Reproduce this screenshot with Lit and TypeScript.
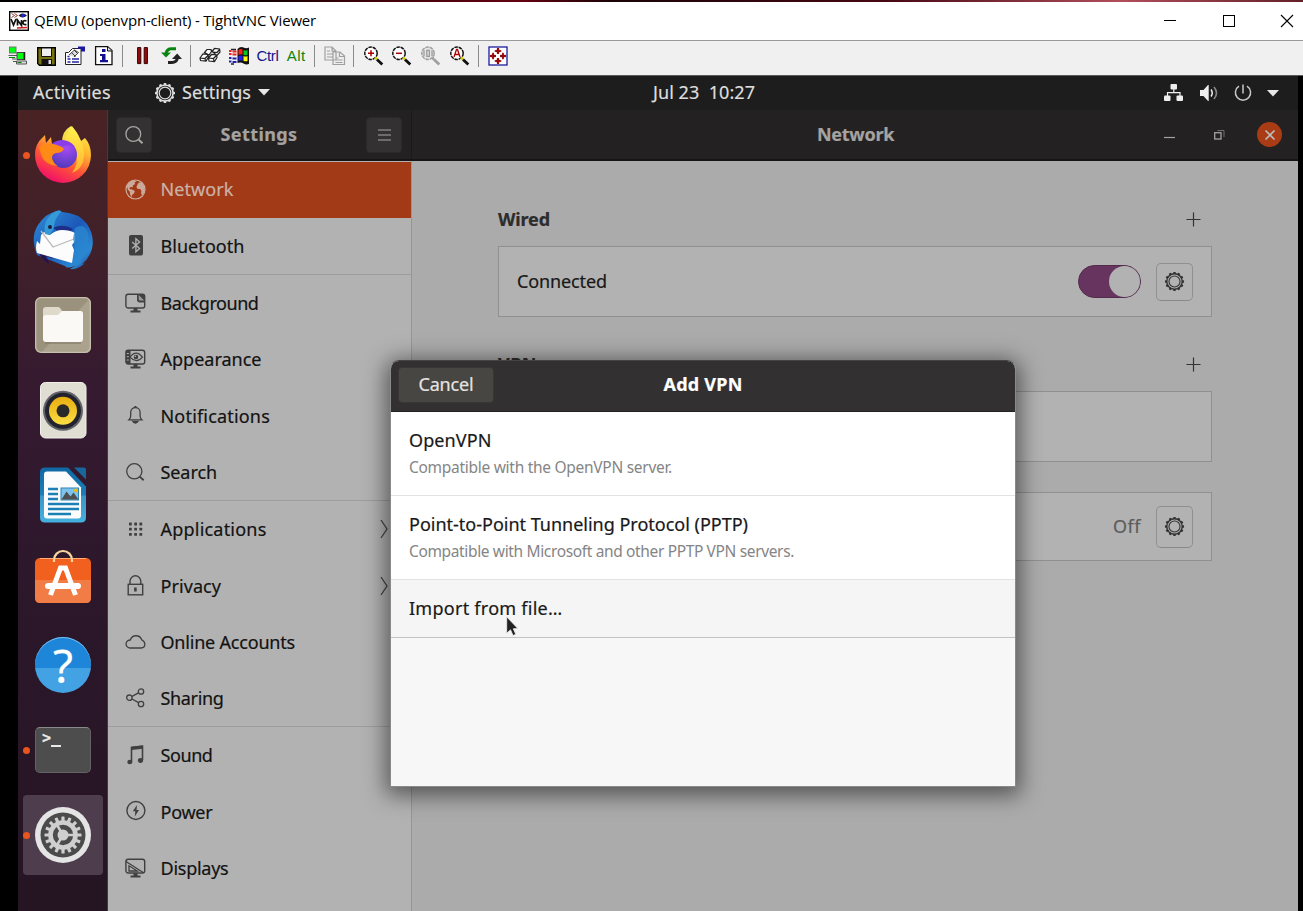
import { LitElement, html, svg, css } from "lit";
import { customElement, property, query } from "lit/decorators.js";
import { classMap } from "lit/directives/class-map.js";

/* One line of text whose tracking is adjusted to a nominal width. */
@customElement("fit-text")
class FitText extends LitElement {
  static styles = css`
    :host { display: inline-block; white-space: pre; line-height: 1.3; flex: none; }
  `;
  @property() text = "";
  @property({ type: Number }) w = 0;
  @query("span") span!: HTMLSpanElement;
  updated() {
    const natural = this.span.getBoundingClientRect().width;
    if (this.w && natural) this.span.style.letterSpacing = `${(this.w - natural) / this.text.length}px`;
  }
  render() { return html`<span>${this.text}</span>`; }
}

const teeth = (n: number, c: number, r: number, w: number, h: number) =>
  Array.from({ length: n }, (_, i) =>
    svg`<rect x=${c - w / 2} y=${c - r} width=${w} height=${h} rx=".6" transform="rotate(${(i * 360) / n} ${c} ${c})" fill="currentColor"/>`);

const gear = html`<svg width="22" height="22" viewBox="0 0 22 22">
  ${teeth(12, 11, 10, 2.6, 2.2)}
  <circle cx="11" cy="11" r="8.100" fill="none" stroke="currentColor" stroke-width="1.500"/>
  <circle cx="11" cy="11" r="5.800" fill="none" stroke="currentColor" stroke-width="1.200"/></svg>`;

const search = html`<svg width="20" height="20" viewBox="0 0 20 20" fill="none" stroke="currentColor" stroke-width="1.3"><circle cx="9.300" cy="9" r="7.400"/><path d="M14.500 14.600l4 3.600" stroke-width="2"/></svg>`;

const monitor = svg`<rect x=".9" y="1.2" width="18.8" height="13.8" rx="2.2" fill="none" stroke="currentColor" stroke-width="1.4"/><path d="M8.5 15h4v2.4h3v2h-10v-2h3z" fill="currentColor"/>`;

const sideIcons: Record<string, unknown> = {
  Network: html`<svg width="21" height="21" viewBox="0 0 21 21"><circle cx="10.5" cy="10.5" r="9.5" fill="none" stroke="currentColor" stroke-width="1.2"/><path fill="currentColor" d="M2 6.5C4 3 6.500 1.500 10 1.300l1.300 1.500-2 .8 1 1.300-2.300 1.300-.3 2-2-.3-1.500 1.300 1 1 2 .2 2.600 1.700-.8 2.300-1.700 1.200-.5 2.400-1.700-2.500-.3-2.800-1.900-2-.7-2.500zM12.500 5l2-1.800 2.300.6 2.800 4.200.2 4-1.500 3-1.300 1.700-.9-2.700.3-2.300-1.300-1.600-2.700-.3-1-1.900 1-1.800z"/></svg>`,
  Bluetooth: html`<svg width="21" height="21" viewBox="0 0 21 21"><rect x="4" y="0" width="14" height="20.500" rx="2" fill="currentColor"/><path d="M7.200 7l7.400 6.500-3.700 3.300V3.600l3.700 3.300L7.200 13.500" fill="none" stroke="#b2b2b2" stroke-width="1.300"/></svg>`,
  Background: html`<svg width="21" height="21" viewBox="0 0 21 21">${monitor}<path d="M12 1v5.500q0 3 3 3h5V3.500L18 1z" fill="currentColor"/><path d="M13.700 2l5.500 5.500h-4q-1.500 0-1.500-1.500z" fill="#999"/></svg>`,
  Appearance: html`<svg width="21" height="21" viewBox="0 0 21 21">${monitor}<path d="M1 1h4.500v14H1z" fill="currentColor"/><path d="M1.800 4.500h2M1.800 7.700h2M1.800 11h2" stroke="#b2b2b2"/><path d="M5 8.200q6-8 12.500 0q-6 7-12.500 0z" fill="none" stroke="currentColor" stroke-width="1.200"/><circle cx="11" cy="8" r="2.300" fill="currentColor"/><circle cx="10.300" cy="7.300" r=".8" fill="#b2b2b2"/></svg>`,
  Notifications: html`<svg width="21" height="21" viewBox="0 0 21 21" fill="none" stroke="currentColor" stroke-width="1.300"><path d="M4 14.800q1.700-1.500 1.700-4V7.200a4.700 4.700 0 0 1 9.400 0v3.600q0 2.500 1.700 4z"/><path d="M10.400 1v2" stroke-width="2"/><path d="M8 16.500q2.400 3 4.800 0z" fill="currentColor"/></svg>`,
  Search: html`<svg width="21" height="21" viewBox="0 0 21 21" fill="none" stroke="currentColor" stroke-width="1.300"><circle cx="9.300" cy="9.300" r="7.600"/><path d="M14.700 14.600l4 3.600" stroke-width="1.900"/></svg>`,
  Applications: html`<svg width="21" height="21" viewBox="0 0 21 21" fill="currentColor">${[4, 9.2, 14.4].map(y => [4, 9.2, 14.4].map(x => svg`<rect x=${x} y=${y - 0.4} width="2.800" height="2.800" rx=".5"/>`))}</svg>`,
  Privacy: html`<svg width="21" height="21" viewBox="0 0 21 21" fill="none" stroke="currentColor" stroke-width="1.400"><rect x="3.200" y="9.300" width="14.500" height="10.500"/><path d="M5 9V6.200a5.400 5.400 0 0 1 10.800 0V9"/><path d="M10.400 12.500v4" stroke-width="2.600"/></svg>`,
  "Online Accounts": html`<svg width="21" height="21" viewBox="0 0 21 21" fill="none" stroke="currentColor" stroke-width="1.300"><path d="M4.800 16a4 4 0 0 1 .5-8A6 6 0 0 1 16.700 7.800q2.700.8 3.200 4.300 0 3.900-3.900 3.900z"/></svg>`,
  Sharing: html`<svg width="21" height="21" viewBox="0 0 21 21" fill="none" stroke="currentColor" stroke-width="1.300"><circle cx="4.400" cy="9.700" r="2.700"/><circle cx="16" cy="3.500" r="2.700"/><circle cx="16" cy="16" r="2.700"/><path d="M7 8.300l6.500-3.400M7 11l6.500 3.600"/></svg>`,
  Sound: html`<svg width="21" height="21" viewBox="0 0 21 21" fill="none" stroke="currentColor"><path d="M6.500 17V2.500l11-1.300V15" stroke-width="1.600"/><path d="M6.500 3.400l11-1.300" stroke-width="3.200"/><g fill="currentColor" stroke="none"><ellipse cx="4.800" cy="17" rx="2.500" ry="2.300"/><ellipse cx="15.500" cy="15.500" rx="2.600" ry="2.400"/></g></svg>`,
  Power: html`<svg width="21" height="21" viewBox="0 0 21 21"><circle cx="10.900" cy="9.500" r="9" fill="none" stroke="currentColor" stroke-width="1.400"/><path d="M12 4L7.800 10.200h2.500L9.800 15.500l4.200-6.500h-2.500z" fill="currentColor"/></svg>`,
  Displays: html`<svg width="21" height="21" viewBox="0 0 21 21">${monitor}<path d="M1 3.500l17.500 11.300M4 7.800v5.200h8.300z" fill="none" stroke="currentColor" stroke-width="1.300"/></svg>`,
};

const sideGroups: [string, number][][] = [
  [["Network", 73], ["Bluetooth", 84]],
  [["Background", 98], ["Appearance", 101], ["Notifications", 109.5], ["Search", 56.5]],
  [["Applications", 106], ["Privacy", 60.5], ["Online Accounts", 134.5], ["Sharing", 63]],
  [["Sound", 52], ["Power", 52], ["Displays", 68]],
];

const lens = (mark: unknown, off = false) => {
  const k = off ? "#a0a0a0" : "#111";
  return html`<svg width="19" height="20" viewBox="0 0 19 20"><circle cx="7" cy="7.300" r="6.200" fill=${off ? "#e6e6e6" : "#fff"} stroke=${k} stroke-width="1.500" stroke-dasharray="3.500 .8"/><path d="M11 11.500l2 2" stroke=${off ? k : "#d8d000"} stroke-width="2.500"/><path d="M13 13.500l5.300 5" stroke=${k} stroke-width="2.800"/>${mark}</svg>`;
};

const toolbar: unknown[] = [
  html`<svg width="20" height="20" viewBox="0 0 20 20"><rect x="1.500" y="1" width="6.500" height="6" fill="#0f1" stroke="#777"/><path d="M.5 9.500h9M4 13h4M5 15.500h3" stroke="#555" fill="none"/><path d="M1 11.500h6" stroke="#080"/><rect x="9" y="6.500" width="7" height="7" fill="#0f1" stroke="#444"/><path d="M16.500 6v8" stroke="#222" stroke-width="1.500"/><path d="M8.500 15v3h10v-3z" fill="#ddd" stroke="#555"/><path d="M9.500 16.500h4" stroke="#080"/></svg>`,
  html`<svg width="19" height="19" viewBox="0 0 19 19"><path d="M.7.700h17.600v17.600H2.500L.700 16.500z" fill="#77720c" stroke="#000" stroke-width="1.400"/><path d="M4.500 1h10v8.500h-10z" fill="#efefef" stroke="#111"/><path d="M4.500 12h10.500v6H4.500z" fill="#111"/><path d="M11.500 13h2.500v4h-2.500z" fill="#ddd"/></svg>`,
  html`<svg width="22" height="20" viewBox="0 0 22 20"><path d="M1.500 6.500h3l4-4h8.500v16H1.500z" fill="#fff" stroke="#222"/><path d="M14 .500h7v5h-4V3h-3z" fill="#1818a0"/><path d="M5 9l5.500-5 4 2.500-4.500 4.500M10 4l4 4M7.500 6.500l4 4" fill="#ddd" stroke="#444"/><path d="M3.500 10.500h2M3.500 13h3m1.500 0h7M3.500 16h3m1.500 0h7" stroke="#2424a0" stroke-width="1.500"/></svg>`,
  html`<svg width="20" height="20" viewBox="0 0 20 20"><path d="M1.600.600h12l4.400 4v14H1.600z" fill="#fff" stroke="#111" stroke-width="1.300"/><path d="M13.500 1v4H18" fill="#ddd" stroke="#111"/><path d="M8 3h3.500v3H8zM6 8h5.500v6H14v2.200H6V14h2v-4H6z" fill="#101090"/></svg>`,
  "|",
  html`<svg width="12" height="18" viewBox="0 0 12 18"><path d="M.6.600h3.200v16H.600zM7.200.600h3.200v16H7.200z" fill="#9d0808" stroke="#300" stroke-width="1"/></svg>`,
  html`<svg width="21" height="20" viewBox="0 0 21 20" fill="none" stroke-width="3"><path d="M5 7.500q1-5 6-4.700h4" stroke="#0a8410"/><path d="M0 6.500h10L5 11.500z" fill="#0a8410"/><path d="M16.500 12q-1 4.500-5.500 4.500H7" stroke="#222"/><path d="M11 13h10l-4.800-5.500z" fill="#222"/></svg>`,
  "|",
  html`<svg width="22" height="18" viewBox="0 0 22 18" fill="#fff" stroke="#222" stroke-width="1.200"><path d="M5.500 5.500l2.500-3 4 0 .5 2-2.500 3.500zM13 4.500l2.500-3 5 .5.500 3-3 3.500zM1 11l3-4 4.500.5 1 2.500-2.500 4-5.500-.5zM9.500 11l3-3.500 5 .5.500 2.500-2.500 4-5.500-.5zM1 11l5 .5L9 8.500M6 11.500l.5 2.500M9.500 11l5 .5 3-3M14.500 11.500l.5 3M14 5l4 .5 3-3.500"/></svg>`,
  html`<svg width="22" height="20" viewBox="0 0 22 20"><path d="M9.500 3q3-3 6-1.500t5.500 0V18q-3 1-5.500-.5T9.500 17z" fill="#111"/><path d="M10.500 4q1.800-1.500 4-.5v5q-2-.8-4 .3z" fill="#f21"/><path d="M15.500 4q2 1 4 0v5q-2 .8-4-.3z" fill="#0c2"/><path d="M10.500 10q1.800-1 4-.3v5q-2-.8-4 .3z" fill="#22f"/><path d="M15.500 10q2 1 4 0v5q-2 .8-4-.3z" fill="#ff0"/><path d="M1 5h2.500m1 .5h4M1 8h2.500m1 .5h4" stroke="#e22" stroke-width="2"/><path d="M1 12h2.500m1 .5h4M1 15.500h2.500m1 .5h4" stroke="#22a" stroke-width="2"/><path d="M3 3.500h5M3 18h3" stroke="#222" stroke-width="1.300"/></svg>`,
  html`<fit-text class="ctrl" text="Ctrl" w="22"></fit-text>`,
  html`<fit-text class="alt" text="Alt" w="19"></fit-text>`,
  "|",
  html`<svg width="22" height="20" viewBox="0 0 22 20" fill="#eee" stroke="#a0a0a0" stroke-width="1.200"><path d="M1 1h7l4 4v9H1zM8 1v4h4M3 5h3M3 8h6M3 11h6M9 6h7l4.500 4v8.500H9zM15.500 6v4.500h5M11.500 12h3M11.500 14h7M11.500 16.500h7"/></svg>`,
  "|",
  lens(svg`<path d="M4 7.300h6M7 4.300v6" stroke="#a00" stroke-width="1.500"/>`),
  lens(svg`<path d="M4 7.300h6" stroke="#a00" stroke-width="1.500"/>`),
  lens(svg`<path d="M3 4.300v6M11 4.300v6M5.800 4.300h2.500v6H5.800z" fill="none" stroke="#999" stroke-width="1.300"/>`, true),
  lens(svg`<path d="M4 11l2.500-7.500h1L10 11M4.800 8.500h4.500" fill="none" stroke="#a00" stroke-width="1.300"/>`),
  "|",
  html`<svg width="20" height="20" viewBox="0 0 20 20"><rect x="1" y="1" width="18" height="18" fill="#fff" stroke="#1c1c9c" stroke-width="1.300"/><path fill="#980808" d="M9 2h2l.3 2 2 .3v1.500l-2 .3L11 8H9l-.3-1.900-2-.3V4.300l2-.3zM9 18h2l.3-2 2-.3v-1.500l-2-.3L11 12H9l-.3 1.900-2 .3v1.500l2 .3zM2 9v2l2 .3.3 2h1.500l.3-2L8 11V9l-1.900-.3-.3-2H4.300l-.3 2zM18 9v2l-2 .3-.3 2h-1.500l-.3-2L12 11V9l1.900-.3.3-2h1.500l.3 2z"/></svg>`,
];

const dock: { icon: unknown; run?: boolean; active?: boolean }[] = [
  { run: true, icon: html`<svg width="60" height="60" viewBox="0 0 60 60"><defs>
      <linearGradient id="fa" x1=".8" y1="0" x2=".3" y2="1"><stop offset="0" stop-color="#fff04a"/><stop offset=".35" stop-color="#ffb52e"/><stop offset=".65" stop-color="#ff5438"/><stop offset="1" stop-color="#f00a6c"/></linearGradient>
      <radialGradient id="fb" cx=".6" cy=".25" r=".8"><stop offset="0" stop-color="#a94bf5"/><stop offset="1" stop-color="#4a39b8"/></radialGradient>
      <linearGradient id="fc" x1="0" y1="0" x2="0" y2="1"><stop offset="0" stop-color="#fff350"/><stop offset="1" stop-color="#ffb42e"/></linearGradient></defs>
      <path d="M12 10l1 8 5-6 1 7 13-2q0-5 3-9 2-4 4-7 6 8 9 15l4-3q6 7 6 17a28 28 0 0 1-56 0q0-11 7-17z" fill="url(#fa)"/>
      <path d="M29 17q0-11 9-16 6 5 9 13 6 12 3 23-3 8-11 11 7-9 4-19-4-9-14-12z" fill="url(#fc)" opacity=".95"/>
      <circle cx="30.500" cy="29.500" r="13.500" fill="url(#fb)"/>
      <path d="M18 20q4-5 12-5 8 1 12 7-6-3-9-1z" fill="#8a3de8"/>
      <path d="M6 22q6-5 14-3 9 2 11 5-2 4-8 4-4 1-4 5 1 5 6 8-14-1-17-12z" fill="#ff8a16"/></svg>` },
  { icon: html`<svg width="60" height="60" viewBox="0 0 60 60"><defs><linearGradient id="ta" x1="0" y1="0" x2="1" y2="1"><stop offset="0" stop-color="#2f8fd8"/><stop offset=".5" stop-color="#1c58b8"/><stop offset=".8" stop-color="#2b8ad4"/><stop offset="1" stop-color="#24348e"/></linearGradient></defs>
      <path d="M4 45Q-3 27 5 15 13 3 24 1q3-2 5 1 17 1 25 12 8 12 5 25-3 10-10 15l3-1q-7 7-15 6l5-3q-9 3-10 0z" fill="url(#ta)"/>
      <path d="M4 36q2 12 12 18-1-5-3-8l8 3z" fill="#251552"/>
      <path d="M20 18q10-5 20 1-4 4-14 3z" fill="#1c2e86"/>
      <path d="M11 22l6 3q6-5 12-5 8 0 13 3v8l-3 4 2 5-2 13L4 43q-2-5 0-12l3 3 1-9z" fill="#fcfcfc"/>
      <path d="M8 21l12 16 21-8" fill="none" stroke="#bbb" stroke-width="1.300"/>
      <path d="M12 24Q9 9 23 1q5-1 5 1-6 6-7 14-1 6-5 9z" fill="#3699d8"/><circle cx="17" cy="17" r="2" fill="#1b1f38"/>
      <path d="M42 18q7-4 10 0 6 6 2 20l5-3q-5 11-12 14l2 4q-5 4-10 3 5-18 1-27z" fill="#2a86d0" opacity=".8"/></svg>` },
  { icon: html`<svg width="60" height="60" viewBox="0 0 60 60"><rect x="2" y="2" width="56" height="56" rx="6" fill="#9a927c"/><path d="M8 58L56 4q2 2 2 4v44q0 6-6 6z" fill="#aaa28c"/><rect x="2.700" y="2.700" width="54.600" height="54.600" rx="5.500" fill="none" stroke="#c6c0ad" stroke-width="1.200"/><path d="M10 18v-3q0-3 3-3h12q2 0 4 4l18 0q3 0 3 3v8H10z" fill="#ded9ca"/><path d="M10 23q0-3 3-3h12l4-4h18q3 0 3 3v25q0 3-3 3H13q-3 0-3-3z" fill="#faf9f6"/><path d="M12 48h36" stroke="#7c7562" stroke-width="1"/></svg>` },
  { icon: html`<svg width="60" height="60" viewBox="0 0 60 60"><defs><linearGradient id="ra" x1="0" y1="0" x2="0" y2="1"><stop offset="0" stop-color="#e8ad10"/><stop offset="1" stop-color="#fbde43"/></linearGradient></defs><rect x="7.500" y="2.500" width="45.500" height="55.500" rx="5" fill="#e0ddd2" stroke="#f2f0ea"/><circle cx="30" cy="30.800" r="20" fill="#62636a"/><circle cx="30" cy="30.800" r="18" fill="#22232d"/><circle cx="30" cy="30.800" r="14" fill="url(#ra)"/><circle cx="30" cy="30.800" r="6.500" fill="#292929"/></svg>` },
  { icon: html`<svg width="60" height="60" viewBox="0 0 60 60"><defs><linearGradient id="wa" x1="0" y1="0" x2="0" y2="1"><stop offset="0" stop-color="#1068a2"/><stop offset=".5" stop-color="#1c7fb8"/><stop offset=".52" stop-color="#3a96c8"/><stop offset="1" stop-color="#45b1df"/></linearGradient></defs><path d="M12 2.500h23l18 19v31q0 5-5 5H12q-5 0-5-5v-45q0-5 5-5z" fill="url(#wa)"/><path d="M41 2.500h10q2 0 2 2v10z" fill="#17679c"/><path d="M14 6.500h19l15 16v28q0 3-3 3H14q-3 0-3-3v-41q0-3 3-3z" fill="#fcfcfc"/><path d="M15 24h10M15 29h10M15 34h10M15 39h31M15 44h31M15 49h23" stroke="#1c7fb6" stroke-width="2.300"/><rect x="28" y="23" width="17.500" height="12" fill="#7cc4ed" stroke="#2a83b6"/><path d="M28.500 34.500l5-8 4 5 3-4 5 7z" fill="#505050"/><circle cx="43" cy="25.500" r="2" fill="#edb817"/></svg>` },
  { icon: html`<svg width="60" height="60" viewBox="0 0 60 60"><rect x="2" y="8" width="56" height="45" rx="5" fill="#f2601f"/><path d="M2 30h56v18q0 5-5 5H7q-5 0-5-5z" fill="#f17c46"/><path d="M7 8.500h46" stroke="#ffad78"/><path d="M21 12V10a9 9 0 0 1 18 0v2" fill="none" stroke="#f6d5a0" stroke-width="2.200"/><path d="M17.500 45l10-27h5l10 27" fill="none" stroke="#fff" stroke-width="5"/><rect x="12" y="33" width="36" height="6" rx="3" fill="#fff"/></svg>` },
  { icon: html`<div class="help">?</div>` },
  { run: true, icon: html`<div class="term"><span>&gt;</span><i></i></div>` },
  { run: true, active: true, icon: html`<svg class="cog" width="60" height="60" viewBox="0 0 60 60"><circle cx="30" cy="30" r="28" fill="#e4e4e4"/><circle cx="30" cy="30" r="22.500" fill="#4b4b4b"/>${teeth(16, 30, 18.5, 3.2, 5)}<circle cx="30" cy="30" r="12.500" fill="none" stroke="currentColor" stroke-width="4.600"/><circle cx="30" cy="30" r="5.500" fill="currentColor"/><path d="M30 30h11M30 30l-6-10M30 30l-6 10" stroke="currentColor" stroke-width="2.500"/></svg>` },
];

@customElement("app-root")
class AppRoot extends LitElement {
  static styles = css`
    :host { display: block; width: 1303px; height: 911px; overflow: hidden; font-family: "Noto Sans", "Open Sans", sans-serif; font-size: 18px; }
    * { box-sizing: border-box; }
    svg { display: block; flex: none; overflow: visible; }
    .viewer { height: 911px; display: flex; flex-direction: column; background: #000; }
    .strip { height: 2px; background: linear-gradient(90deg, #000 0 16%, #3c0209 28%, #640212 40%, #1a0306 47%, #470714 68%, #b14e5a 86%, #632028); flex: none; }
    .title { height: 38px; background: #fff; display: flex; align-items: center; padding: 0 10px 0 9px; font: 15px "Open Sans"; color: #000; flex: none; }
    .title fit-text { margin-left: 5px; }
    .title .ctl { margin-left: auto; display: flex; gap: 46.500px; align-items: center; }
    .tools { height: 36px; background: #f0f0f0; border-top: 1px solid #999; border-bottom: 1px solid #5a5a5a; display: flex; padding: 0 0 4px 3.500px; flex: none; }
    .tool { width: 28.800px; display: flex; align-items: center; justify-content: center; font: 15px "Liberation Sans", sans-serif; }
    .sep { width: 9.600px; display: flex; justify-content: center; padding-top: 4px; }
    .sep::before { content: ""; width: 1px; height: 22px; background: #8a8a8a; margin-right: 1px; }
    .ctrl { color: #15158c; } .alt { color: #0d840d; }
    .desk { flex: 1; margin: 0 5px 0 18px; position: relative; display: flex; flex-direction: column; min-height: 0; overflow: hidden; background: #1d1d1d; -webkit-text-stroke: .2px currentColor; }
    .panel { height: 34px; flex: none; display: flex; align-items: center; color: #dedede; padding: 0 19px 0 15px; }
    .panel .l, .panel .r { display: flex; align-items: center; }
    .panel .l { width: 620px; }
    .panel .l svg:first-of-type { margin: 0 6px 0 43px; }
    .panel .l svg:last-of-type { margin-left: 7px; }
    .panel .r { margin-left: auto; gap: 15px; }
    .body { flex: 1; display: flex; min-height: 0; }
    .dock { width: 90px; flex: none; background: linear-gradient(#492224, #40202a 18%, #351a30 35%, #2c172b 60%, #251523); border-right: 1px solid #4b3540; padding-top: 5px; display: flex; flex-direction: column; gap: 5px; }
    .app { width: 80px; height: 80px; flex: none; margin-left: 5px; display: flex; align-items: center; border-radius: 4px; }
    .app.active { background: #4e3e4d; }
    .app::before { content: ""; width: 7px; height: 7px; border-radius: 50%; flex: none; }
    .app.run::before { background: #e9541f; }
    .app > * { margin-left: 3px; }
    .app .help { margin-left: 5px; width: 56px; height: 56px; border-radius: 50%; background: linear-gradient(#1e86d8 0 55%, #42a2e3 55%); color: #fff; font: 46px/57px "Noto Sans"; text-align: center; box-shadow: inset 0 1px #79bdeb; }
    .app .term { margin-left: 5px; width: 56px; height: 46px; border-radius: 5px; background: #4d4d4d; border: 1px solid #636363; border-top-color: #8a8a8a; color: #e8e8e8; display: flex; padding: 3px 0 0 6px; font: bold 15px/15px "DejaVu Sans Mono"; }
    .term i { width: 10px; height: 2px; background: #e8e8e8; margin-top: 14px; }
    .cog { color: #cfcfcf; }
    .win { flex: 1; display: flex; flex-direction: column; background: #ababab; min-width: 0; }
    .head { height: 51px; flex: none; background: #242122; border-bottom: 2px solid #161415; display: flex; color: #a5a3a1; font-weight: 700; }
    .hl { width: 304px; border-right: 1px solid #1b191a; display: flex; align-items: center; justify-content: space-between; padding: 0 9px 0 8px; }
    .hr { flex: 1; display: flex; align-items: center; padding: 0 16px 0 405px; }
    .sq { width: 36px; height: 36px; border-radius: 4px; background: #343132; border: 1px solid #2b292a; display: flex; align-items: center; justify-content: center; color: #a8a6a4; }
    .hr .min { margin-left: 270px; } .hr .max { margin-left: 39px; }
    .x { margin-left: auto; width: 25px; height: 25px; border-radius: 50%; background: #a93c15; display: flex; align-items: center; justify-content: center; color: #bbb; }
    .cols { flex: 1; display: flex; min-height: 0; }
    .side { width: 303.500px; flex: none; background: #b2b2b2; border-right: 1px solid #969696; overflow: hidden; padding-top: .5px; color: #111; }
    .group + .group { border-top: 1.200px solid #9d9d9d; }
    .row { height: 56.300px; display: flex; align-items: center; padding: 0 23px 0 17px; color: #404040; }
    .row fit-text { margin: 1px 0 0 14.500px; color: #131313; }
    .row svg:last-child { margin-left: auto; }
    .row.sel { background: #a23a17; color: #cbaa9c; }
    .row.sel fit-text { color: #cbb2a7; }
    .main { flex: 1; padding: 37px 86px 0 86.500px; color: #2c2c2c; }
    .sec { height: 48px; display: flex; align-items: center; justify-content: space-between; padding: 0 11px 5px 0; font-weight: 700; }
    .card { height: 71px; border: 1px solid #909090; background: #b2b2b2; display: flex; align-items: center; padding: 0 18px; color: #181818; }
    .card .name { margin-right: auto; }
    .card + .sec { height: 74px; padding-top: 26px; }
    .card + .card { height: 69px; margin-top: 30px; }
    .sw { width: 63px; height: 33px; border-radius: 17px; background: #673460; border: 1px solid #512a4c; display: flex; justify-content: flex-end; margin-right: 15px; }
    .sw i { width: 31px; height: 31px; border-radius: 50%; background: #b2b2b2; }
    .gb { width: 37px; height: 38px; border: 1px solid #909090; border-bottom-color: #888; border-radius: 5px; display: flex; align-items: center; justify-content: center; color: #333; }
    .gb svg { width: 21px; height: 21px; }
    .gb.tall { height: 42px; }
    .off { color: #5c5c5c; margin: 0 15px 0 auto; }
    .modal { position: absolute; left: 372px; top: 284px; width: 626px; height: 427px; border-radius: 9px 9px 1px 1px; background: #f7f7f7; border: 1px solid #8a8a8a; border-top-color: #454344; box-shadow: 0 4px 22px 4px rgba(0,0,0,.52); overflow: hidden; color: #191919; }
    .mh { height: 51px; margin: 0 -1px; background: #323031; border-bottom: 1px solid #222; display: grid; grid-template-columns: 1fr auto 1fr; align-items: center; color: #fff; padding: 0 8px 2px; font-weight: 700; }
    .mh .cancel { width: 96px; height: 36px; background: #484643; border: 1px solid #393735; border-radius: 4px; color: #e6e3e0; font-weight: 400; display: flex; align-items: center; justify-content: center; }
    .opt { height: 84px; background: #fff; border-bottom: 1px solid #e2e2e2; padding: 17px 18px 0; display: flex; flex-direction: column; align-items: flex-start; gap: 5px; }
    .opt .sub { font-size: 15.500px; color: #858585; -webkit-text-stroke-width: 0; }
    .opt.hover { height: 58px; background: #f5f5f5; border-color: #c3c3c3; }
    .cursor { position: absolute; left: 487.500px; top: 540px; }
  `;

  render() {
    const tri = html`<svg width="12" height="7" viewBox="0 0 12 7"><path d="M0 0h12L6 6.500z" fill="#e8e8e8"/></svg>`;
    const plus = html`<svg width="15" height="15" viewBox="0 0 15 15"><path d="M.5 7.500h14M7.500.5v14" stroke="#333" stroke-width="1.200"/></svg>`;
    return html`<div class="viewer">
      <div class="strip"></div>
      <div class="title">
        <svg width="20" height="20" viewBox="0 0 20 20"><rect x=".7" y=".7" width="18.600" height="18.600" fill="#fff" stroke="#000" stroke-width="1.400"/><path d="M2.500 2.500l3 2-3 2M5.500 2.500l3 2-3 2" fill="none" stroke="#a33"/><path d="M9.500 4.500q4-4 8.500 0-4.500 4-8.500 0z" fill="#222"/><circle cx="14" cy="4.500" r="1.800" fill="#22d"/><path d="M2 8l2.500 6L7 8M8.500 14.500V9l4 5.500V9M17.500 10q-3.500-1-3.500 1.500t3.500 2" fill="none" stroke="#111" stroke-width="1.700"/><path d="M8 17l10-.5" stroke="#c22" stroke-width="1.400"/></svg>
        <fit-text text="QEMU (openvpn-client) - TightVNC Viewer" w="282"></fit-text>
        <div class="ctl">
          <svg width="12" height="12" viewBox="0 0 12 12"><path d="M0 5.500h12" stroke="#000"/></svg>
          <svg width="12" height="12" viewBox="0 0 12 12"><rect x=".5" y=".5" width="11" height="11" fill="none" stroke="#000"/></svg>
          <svg width="12" height="12" viewBox="0 0 12 12"><path d="M0 0l12 12M12 0L0 12" stroke="#000" stroke-width="1.100"/></svg>
        </div>
      </div>
      <div class="tools">${toolbar.map(t => t === "|" ? html`<div class="sep"></div>` : html`<div class="tool">${t}</div>`)}</div>
      <div class="desk">
        <div class="panel">
          <div class="l"><fit-text text="Activities" w="78"></fit-text>${gear}<fit-text text="Settings" w="69"></fit-text>${tri}</div>
          <fit-text text="Jul 23  10:27" w="102"></fit-text>
          <div class="r">
            <svg width="20" height="18" viewBox="0 0 20 18" fill="#eee"><rect x="6.500" y="0" width="6.500" height="5.500" rx="1"/><rect x="0" y="11.500" width="6.500" height="5.500" rx="1"/><rect x="12.500" y="11.500" width="6.500" height="5.500" rx="1"/><path d="M9.800 5v4M3.500 12V8.700h12.500V12" fill="none" stroke="#eee" stroke-width="1.200"/></svg>
            <svg width="20" height="18" viewBox="0 0 20 18"><path d="M1 6h3.500L9 1h.7v16H9l-4.500-5H1z" fill="#eee"/><path d="M12 5.500q2.500 3.500 0 7" fill="none" stroke="#eee" stroke-width="1.500"/><path d="M15 3q5 6 0 12" fill="none" stroke="#888" stroke-width="1.600"/></svg>
            <svg width="18" height="18" viewBox="0 0 18 18" fill="none" stroke="#c8c8c8" stroke-width="1.500"><path d="M5 2.200a7.600 7.600 0 1 0 8 0M9 .5v9"/></svg>
            ${tri}
          </div>
        </div>
        <div class="body">
          <div class="dock">${dock.map(d => html`<div class=${classMap({ app: true, run: !!d.run, active: !!d.active })}>${d.icon}</div>`)}</div>
          <div class="win">
            <div class="head">
              <div class="hl"><div class="sq">${search}</div><fit-text text="Settings" w="77"></fit-text>
                <div class="sq"><svg width="13" height="12" viewBox="0 0 13 12"><path d="M0 1h13M0 6h13M0 11h13" stroke="currentColor" stroke-width="1.200"/></svg></div></div>
              <div class="hr"><fit-text text="Network" w="77"></fit-text>
                <svg class="min" width="11" height="10" viewBox="0 0 11 10"><path d="M0 7.500h11" stroke="currentColor" stroke-width="1.200"/></svg>
                <svg class="max" width="11" height="10" viewBox="0 0 11 10" fill="none" stroke="currentColor"><rect x=".7" y="2.700" width="6.300" height="6.300" stroke-width="1.300"/><path d="M3.500.5h6.500V7" opacity=".6"/></svg>
                <div class="x"><svg width="10" height="10" viewBox="0 0 10 10"><path d="M.5.5l9 9M9.500.5l-9 9" stroke="currentColor" stroke-width="1.700"/></svg></div>
              </div>
            </div>
            <div class="cols">
              <div class="side">${sideGroups.map(g => html`<div class="group">${g.map(([t, w]) => html`
                <div class=${classMap({ row: true, sel: t === "Network" })}>${sideIcons[t]}<fit-text .text=${t} .w=${w}></fit-text>${t === "Applications" || t === "Privacy" ? html`<svg width="8" height="20" viewBox="0 0 8 20"><path d="M1 1l6 9-6 9" fill="none" stroke="#444" stroke-width="1.300"/></svg>` : ""}</div>`)}</div>`)}
              </div>
              <div class="main">
                <div class="sec"><fit-text text="Wired" w="52"></fit-text>${plus}</div>
                <div class="card"><fit-text class="name" text="Connected" w="90"></fit-text><div class="sw"><i></i></div><div class="gb">${gear}</div></div>
                <div class="sec"><fit-text text="VPN" w="39"></fit-text>${plus}</div>
                <div class="card"></div>
                <div class="card"><fit-text class="off" text="Off" w="28"></fit-text><div class="gb tall">${gear}</div></div>
              </div>
            </div>
          </div>
        </div>
        <div class="modal">
          <div class="mh"><div class="cancel"><fit-text text="Cancel" w="55"></fit-text></div><fit-text text="Add VPN" w="79"></fit-text></div>
          <div class="opt"><fit-text text="OpenVPN" w="82.5"></fit-text><fit-text class="sub" text="Compatible with the OpenVPN server." w="263"></fit-text></div>
          <div class="opt"><fit-text text="Point-to-Point Tunneling Protocol (PPTP)" w="339"></fit-text><fit-text class="sub" text="Compatible with Microsoft and other PPTP VPN servers." w="385"></fit-text></div>
          <div class="opt hover"><fit-text text="Import from file…" w="153.5"></fit-text></div>
        </div>
        <svg class="cursor" width="12" height="21" viewBox="0 0 12 21"><path d="M.7.800v16.500l3.800-3.500 2.500 5.700 2.800-1.200-2.500-5.500 4.500-.3z" fill="#222" stroke="#eee" stroke-width=".8"/></svg>
      </div>
    </div>`;
  }
}
